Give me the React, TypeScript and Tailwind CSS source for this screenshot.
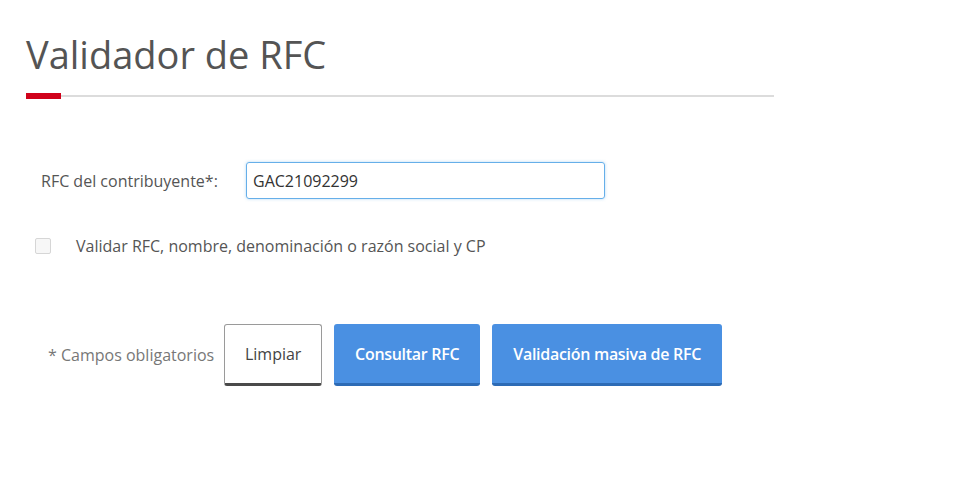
import React from "react";

export default function App() {
  return (
    <div className="w-[954px] h-[484px] bg-white" style={{ fontFamily: '"Open Sans", sans-serif' }}>
      <div className="pl-[26px] pt-[29px] w-[774px]">
        <h1 className="text-[38px] leading-[50px] text-[#545454] font-normal">Validador de RFC</h1>
        <div className="mt-[14px] flex items-center">
          <div className="w-[35px] h-[6px] bg-[#d0021b]" />
          <div className="flex-1 h-[2px] bg-[#dcdcdc]" />
        </div>
      </div>
      <div className="pl-[41px] mt-[63px] flex items-center">
        <label className="text-[16px] text-[#555] w-[205px]">RFC del contribuyente*:</label>
        <input
          defaultValue="GAC21092299"
          className="w-[359px] h-[37px] border border-[#66afe9] rounded-[3px] px-[6px] text-[16px] text-[#333] outline-none shadow-[0_0_3px_rgba(102,175,233,0.5)]"
          style={{ fontFamily: '"Open Sans", sans-serif' }}
        />
      </div>
      <div className="pl-[35px] mt-[35px] flex items-center">
        <div className="w-[16px] h-[16px] border border-[#d6d6d6] rounded-[2px] bg-[#f7f7f7]" />
        <span className="ml-[25px] text-[16px] text-[#555]">Validar RFC, nombre, denominación o razón social y CP</span>
      </div>
      <div className="pl-[48px] mt-[66px] flex items-center">
        <span className="text-[16px] text-[#777] mr-[10px]">* Campos obligatorios</span>
        <button className="w-[98px] h-[62px] bg-white border border-[#9a9a9a] border-b-[3px] border-b-[#4a4a4a] rounded-[3px] text-[16px] text-[#444]">Limpiar</button>
        <button className="ml-[12px] w-[146px] h-[62px] bg-[#4a90e2] border-b-[3px] border-b-[#2d6bb5] rounded-[3px] text-[16px] text-white font-semibold tracking-[-0.3px]">Consultar RFC</button>
        <button className="ml-[12px] w-[230px] h-[62px] bg-[#4a90e2] border-b-[3px] border-b-[#2d6bb5] rounded-[3px] text-[16px] text-white font-semibold tracking-[-0.3px]">Validación masiva de RFC</button>
      </div>
    </div>
  );
}
